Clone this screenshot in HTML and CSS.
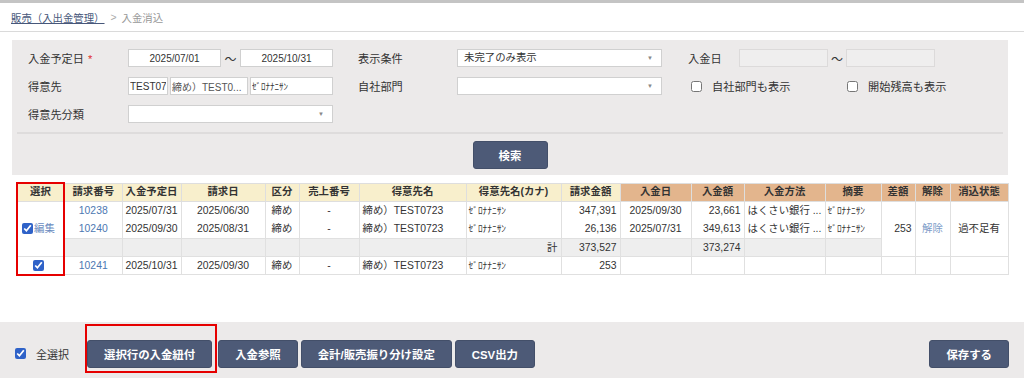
FILE: index.html
```html
<!DOCTYPE html>
<html>
<head lang="ja">
    <meta charset="UTF-8">
    <title>入金消込</title>
    <link rel="stylesheet" href="styles.css">
</head>
<body>
<div class="header">
    <a href="#" class="crumb_link">販売（入出金管理）</a>
    <span class="crumb_sep">&gt;</span>
    <span class="crumb_cur">入金消込</span>
</div>
<div class="container">
    <div class="search_panel">
        <div class="search_grid">
            <div class="f_label">入金予定日<span class="req">*</span></div>
            <div class="f_field range">
                <input class="inp center" type="text" value="2025/07/01">
                <span class="tilde">〜</span>
                <input class="inp center" type="text" value="2025/10/31">
            </div>
            <div class="f_label">表示条件</div>
            <div class="f_field"><div class="sel">未完了のみ表示<span class="arrow">▼</span></div></div>
            <div class="f_label">入金日</div>
            <div class="f_field range range_r">
                <input class="inp disabled" type="text" value="" disabled>
                <span class="tilde">〜</span>
                <input class="inp disabled" type="text" value="" disabled>
            </div>

            <div class="f_label">得意先</div>
            <div class="f_field multi">
                <input class="inp w_code" type="text" value="TEST07">
                <input class="inp w_name" type="text" value="締め）TEST0...">
                <input class="inp w_kana" type="text" value="ｾﾞﾛﾅﾅﾆｻﾝ">
            </div>
            <div class="f_label">自社部門</div>
            <div class="f_field"><div class="sel"><span class="arrow">▼</span></div></div>
            <div class="checks">
                <label class="check_item"><input type="checkbox">自社部門も表示</label>
                <label class="check_item"><input type="checkbox">開始残高も表示</label>
            </div>

            <div class="f_label">得意先分類</div>
            <div class="f_field"><div class="sel"><span class="arrow">▼</span></div></div>
        </div>
        <div class="panel_foot">
            <button class="btn btn_search">検索</button>
        </div>
    </div>

    <table class="list">
        <colgroup>
            <col style="width:47px"><col style="width:58px"><col style="width:59px"><col style="width:84px">
            <col style="width:34px"><col style="width:60px"><col style="width:107px"><col style="width:95px">
            <col style="width:59px"><col style="width:71px"><col style="width:53px"><col style="width:81px">
            <col style="width:56px"><col style="width:34px"><col style="width:35px"><col style="width:58px">
        </colgroup>
        <thead>
        <tr>
            <th class="sel_col sel_top">選択</th>
            <th>請求番号</th>
            <th>入金予定日</th>
            <th>請求日</th>
            <th>区分</th>
            <th>売上番号</th>
            <th>得意先名</th>
            <th>得意先名(カナ)</th>
            <th>請求金額</th>
            <th class="pay">入金日</th>
            <th class="pay">入金額</th>
            <th class="pay">入金方法</th>
            <th class="pay">摘要</th>
            <th class="pay">差額</th>
            <th class="pay">解除</th>
            <th class="pay">消込状態</th>
        </tr>
        </thead>
        <tbody>
        <tr class="double">
            <td class="sel_col c" rowspan="2"><input type="checkbox" checked><a href="#" class="edit">編集</a></td>
            <td class="c"><a href="#">10238</a><br><a href="#">10240</a></td>
            <td class="c">2025/07/31<br>2025/09/30</td>
            <td class="c">2025/06/30<br>2025/08/31</td>
            <td class="c">締め<br>締め</td>
            <td class="c">-<br>-</td>
            <td>締め）TEST0723<br>締め）TEST0723</td>
            <td class="kana">ｾﾞﾛﾅﾅﾆｻﾝ<br>ｾﾞﾛﾅﾅﾆｻﾝ</td>
            <td class="r">347,391<br>26,136</td>
            <td class="c">2025/09/30<br>2025/07/31</td>
            <td class="r">23,661<br>349,613</td>
            <td>はくさい銀行 ...<br>はくさい銀行 ...</td>
            <td class="kana">ｾﾞﾛﾅﾅﾆｻﾝ<br>ｾﾞﾛﾅﾅﾆｻﾝ</td>
            <td class="r" rowspan="2">253</td>
            <td class="c" rowspan="2"><a href="#" class="soft">解除</a></td>
            <td class="c" rowspan="2">過不足有</td>
        </tr>
        <tr class="total">
            <td></td>
            <td></td>
            <td></td>
            <td></td>
            <td></td>
            <td></td>
            <td class="r">計</td>
            <td class="r">373,527</td>
            <td></td>
            <td class="r">373,274</td>
            <td></td>
            <td></td>
        </tr>
        <tr>
            <td class="sel_col sel_bottom c"><input type="checkbox" checked></td>
            <td class="c"><a href="#">10241</a></td>
            <td class="c">2025/10/31</td>
            <td class="c">2025/09/30</td>
            <td class="c">締め</td>
            <td class="c">-</td>
            <td>締め）TEST0723</td>
            <td class="kana">ｾﾞﾛﾅﾅﾆｻﾝ</td>
            <td class="r">253</td>
            <td></td>
            <td></td>
            <td></td>
            <td></td>
            <td></td>
            <td></td>
            <td></td>
        </tr>
        </tbody>
    </table>
</div>

<div class="action_bar">
    <label class="select_all"><input type="checkbox" checked>全選択</label>
    <span class="mark"><button class="btn">選択行の入金紐付</button></span>
    <button class="btn">入金参照</button>
    <button class="btn">会計/販売振り分け設定</button>
    <button class="btn">CSV出力</button>
    <button class="btn btn_save">保存する</button>
</div>
</body>
</html>
```

FILE: styles.css
```css
* {
    box-sizing: border-box;
}
body {
    margin: 0;
    font-family: "Liberation Sans", "Noto Sans CJK JP", sans-serif;
    font-size: 10.4px;
    color: #333;
    background: #fff;
}
a {
    text-decoration: none;
    color: #4c78b2;
}
input[type="checkbox"] {
    width: 11px;
    height: 11px;
    margin: 0;
    accent-color: #2f62c8;
    vertical-align: middle;
}

/* header */
.header {
    height: 32px;
    border-top: 3px solid #c4c4c4;
    border-bottom: 1px solid #dadada;
    padding: 0 11px;
    display: flex;
    align-items: center;
}
.crumb_link {
    color: #47577a;
    text-decoration: underline;
}
.crumb_sep {
    color: #aaa;
    margin: 0 5px 0 6px;
}
.crumb_cur {
    color: #999;
}

.container {
    padding: 8px 16px 0 12px;
}

/* search panel */
.search_panel {
    background: #eceaea;
    padding: 9px 5px 6px 5px;
}
.search_grid {
    display: grid;
    grid-template-columns: 100px 230px 99px 231px 51px 1fr;
    grid-auto-rows: 18px;
    row-gap: 10px;
    align-items: center;
    padding-left: 11px;
}
.f_label {
    font-size: 11.2px;
    color: #333;
}
.req {
    color: #e03030;
    margin-left: 4px;
}
.f_field {
    display: flex;
    align-items: center;
    height: 18px;
}
.inp {
    height: 18px;
    border: 1px solid #d0d0d0;
    background: #fff;
    font-family: "Liberation Sans", "Noto Sans CJK JP", sans-serif;
    font-size: 10px;
    color: #333;
    padding: 0 2px;
    margin: 0;
    outline: none;
}
.inp.center {
    text-align: center;
}
.range .inp {
    width: 93px;
}
.range_r .inp {
    width: 89px;
}
.inp.disabled {
    background: #efeeee;
    border-color: #dcdada;
}
.tilde {
    width: 19px;
    text-align: center;
    font-size: 12px;
}
.range_r .tilde {
    width: 18px;
}
.multi .inp {
    margin-right: 2px;
    padding: 0 1px;
}
.w_code {
    width: 40px;
}
.w_name {
    width: 78px;
    color: #555;
}
.w_kana {
    width: 83px;
    font-size: 9px;
}
.sel {
    position: relative;
    width: 205px;
    height: 18px;
    border: 1px solid #d0d0d0;
    background: #fff;
    font-size: 10.4px;
    line-height: 16px;
    padding: 0 6px;
}
.sel .arrow {
    position: absolute;
    right: 8px;
    top: 0;
    font-size: 6px;
    color: #888;
}
.checks {
    grid-column: 5 / 7;
    display: flex;
    padding-left: 3px;
}
.check_item {
    width: 159px;
    display: flex;
    align-items: center;
    font-size: 11.2px;
}
.check_item input {
    margin-right: 10px;
    accent-color: #fff;
}
.panel_foot {
    margin-top: 9px;
    border-top: 2px solid #dedcdc;
    padding-top: 7px;
    display: flex;
    justify-content: center;
}

/* buttons */
.btn {
    height: 28px;
    padding: 0 16px;
    border: 1px solid #434f69;
    border-radius: 3px;
    background: #4d5a77;
    color: #fff;
    font-family: "Liberation Sans", "Noto Sans CJK JP", sans-serif;
    font-size: 11.4px;
    font-weight: bold;
    margin: 0;
}
.btn_search {
    width: 75px;
}

/* table */
.list {
    margin: 7px 0 0 4px;
    width: 991px;
    table-layout: fixed;
    border-collapse: collapse;
}
.list th {
    height: 18px;
    line-height: 16px;
    padding: 0 2px;
    background: #f8efcc;
    border: 1px solid #dedede;
    font-weight: bold;
    text-align: center;
    white-space: nowrap;
}
.list th.pay {
    background: #e3b58d;
}
.list td {
    height: 18px;
    line-height: 17px;
    padding: 0 3px;
    border: 1px solid #e0e0e0;
    white-space: nowrap;
    overflow: hidden;
}
.list tr.double td {
    line-height: 18px;
    padding-top: 0;
}
.list tr.total td {
    background: #eeeeee;
}
.list td.c {
    text-align: center;
}
.list td.r {
    text-align: right;
}
.list td.kana {
    font-size: 9.4px;
    padding-left: 2px;
}
.list td.sel_col {
    background: #fff;
    border-left: 2px solid #e60000;
    border-right: 2px solid #e60000;
    padding: 0 4px 0 0;
}
.list th.sel_top {
    border: 2px solid #e60000;
    border-bottom: 1px solid #dedede;
}
.list td.sel_bottom {
    border-bottom: 2px solid #e60000;
}
.edit {
    color: #6a8cc0;
    margin-left: 1px;
    vertical-align: middle;
}
.soft {
    color: #7d9cc8;
}

/* bottom bar */
.action_bar {
    margin-top: 46px;
    height: 58px;
    background: #eceaea;
    display: flex;
    align-items: flex-start;
    padding: 18px 15px 0 15px;
}
.select_all {
    height: 28px;
    display: flex;
    align-items: center;
    font-size: 11px;
    width: 70px;
}
.select_all input {
    margin-right: 10px;
}
.mark {
    display: inline-block;
    border: 2px solid #e60000;
    margin: -16px 0 0 0;
    padding: 14px 3px 3px 0;
}
.action_bar > .btn {
    margin-left: 3px;
}
.mark + .btn {
    margin-left: 1px;
}
.action_bar > .btn_save {
    margin-left: auto;
}
```
